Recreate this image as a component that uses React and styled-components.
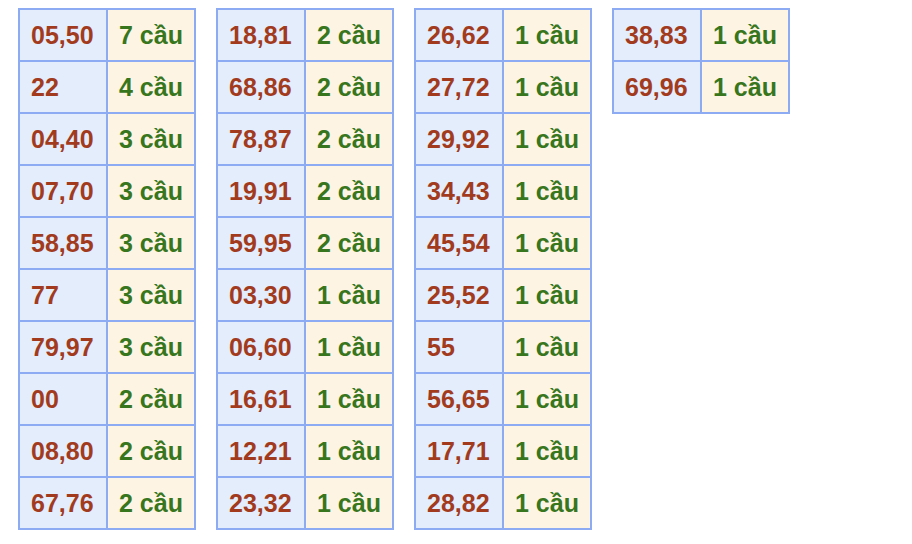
import React from 'react'
import styled, { createGlobalStyle } from 'styled-components'

const GlobalStyle = createGlobalStyle`
  body {
    margin: 0;
    background: #fff;
    font-family: "Liberation Sans", Arial, sans-serif;
  }
`

const columns = [
  [
    ['05,50', 7], ['22', 4], ['04,40', 3], ['07,70', 3], ['58,85', 3],
    ['77', 3], ['79,97', 3], ['00', 2], ['08,80', 2], ['67,76', 2],
  ],
  [
    ['18,81', 2], ['68,86', 2], ['78,87', 2], ['19,91', 2], ['59,95', 2],
    ['03,30', 1], ['06,60', 1], ['16,61', 1], ['12,21', 1], ['23,32', 1],
  ],
  [
    ['26,62', 1], ['27,72', 1], ['29,92', 1], ['34,43', 1], ['45,54', 1],
    ['25,52', 1], ['55', 1], ['56,65', 1], ['17,71', 1], ['28,82', 1],
  ],
  [
    ['38,83', 1], ['69,96', 1],
  ],
]

const App = () => {
  return (
    <>
      <GlobalStyle />
      <Wrapper>
        {columns.map((rows, i) => (
          <Table key={i}>
            <tbody>
              {rows.map(([pair, count]) => (
                <tr key={pair}>
                  <Cell $kind='pair'>{pair}</Cell>
                  <Cell $kind='count'>{count} cầu</Cell>
                </tr>
              ))}
            </tbody>
          </Table>
        ))}
      </Wrapper>
    </>
  )
}

const Wrapper = styled.div`
  display: flex;
  align-items: flex-start;
  gap: 20px;
  padding: 8px 0 0 18px;
`

const Table = styled.table`
  border-collapse: collapse;
  border: 2px solid #8cabf3;
  width: 178px;
  table-layout: fixed;
`

const Cell = styled.td`
  border: 2px solid #8cabf3;
  height: 52px;
  padding: 1px 0 0 11px;
  box-sizing: border-box;
  width: 50%;
  font-size: 25px;
  font-weight: 700;
  vertical-align: middle;
  white-space: nowrap;
  background: ${p => p.$kind === 'pair' ? '#e3edfc' : '#fdf4e3'};
  color: ${p => p.$kind === 'pair' ? '#a23b1e' : '#38761d'};
`

export default App
